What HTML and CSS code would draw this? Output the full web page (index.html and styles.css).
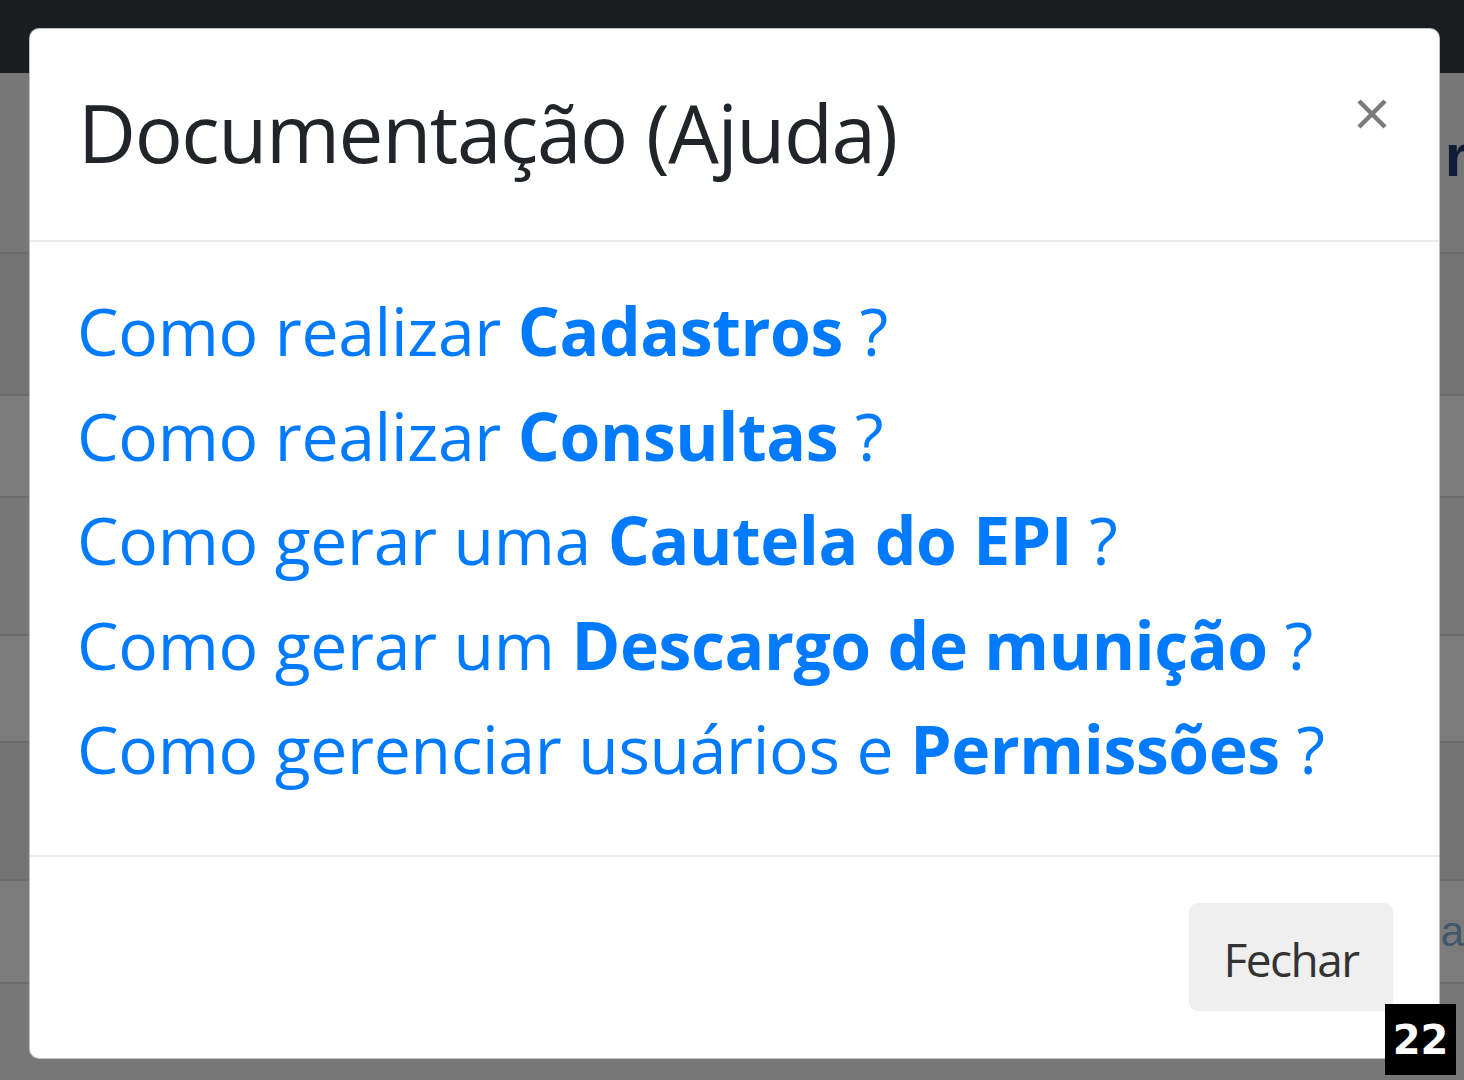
FILE: index.html
```html
<!DOCTYPE html>
<html lang="pt-BR">
<head>
<meta charset="utf-8">
<title>Documentação (Ajuda)</title>
<link rel="stylesheet" href="styles.css">
</head>
<body>
<div class="page">
  <div class="navbar"></div>
  <div class="rows">
    <div class="row r-mid"><span class="peek peek-r">r</span></div>
    <div class="row r-dark"></div>
    <div class="row r-light"></div>
    <div class="row r-mid"></div>
    <div class="row r-light"></div>
    <div class="row r-dark"></div>
    <div class="row r-light"><span class="peek peek-a">a</span></div>
    <div class="row r-mid last"></div>
  </div>
</div>

<div class="modal">
  <div class="modal-header">
    <h5 class="modal-title">Documentação (Ajuda)</h5>
    <button class="close" type="button" aria-label="Fechar">
      <svg width="32" height="32" viewBox="0 0 32 32"><path d="M3 3 L29 29 M29 3 L3 29" stroke="#7a7a7a" stroke-width="4.5" stroke-linecap="butt"/></svg>
    </button>
  </div>
  <div class="modal-body">
    <a class="doc-link" href="#">Como realizar <b>Cadastros</b> ?</a>
    <a class="doc-link" href="#">Como realizar <b>Consultas</b> ?</a>
    <a class="doc-link" href="#">Como gerar uma <b>Cautela do EPI</b> ?</a>
    <a class="doc-link" href="#">Como gerar um <b>Descargo de munição</b> ?</a>
    <a class="doc-link" href="#">Como gerenciar usuários e <b>Permissões</b> ?</a>
  </div>
  <div class="modal-footer">
    <button class="btn" type="button">Fechar</button>
  </div>
</div>
<div class="badge">22</div>
</body>
</html>
```
FILE: styles.css
```css
html, body {
  margin: 0;
  padding: 0;
  width: 1464px;
  height: 1080px;
  overflow: hidden;
  font-family: "Open Sans", "Noto Sans", "Liberation Sans", sans-serif;
}
body {
  background: #777777;
  position: relative;
}
.page {
  display: flex;
  flex-direction: column;
  height: 1080px;
}
.navbar {
  height: 73px;
  background: #1b1e21;
  flex: none;
}
.rows {
  display: flex;
  flex-direction: column;
  flex: 1;
}
.row {
  display: flex;
  justify-content: flex-end;
  align-items: center;
  border-bottom: 2px solid #6b6c6f;
  box-sizing: border-box;
  overflow: hidden;
}
.row:nth-child(1) { height: 181px; }
.row:nth-child(2) { height: 142px; }
.row:nth-child(3) { height: 102px; }
.row:nth-child(4) { height: 138px; }
.row:nth-child(5) { height: 107px; }
.row:nth-child(6) { height: 138px; }
.row:nth-child(7) { height: 103px; }
.row.last { flex: 1; border-bottom: none; }
.r-mid { background: #777777; }
.r-dark { background: #737373; }
.r-light { background: #7b7b7b; }
.peek {
  font-family: "Liberation Sans", sans-serif;
}
.peek-r {
  font-size: 60px;
  font-weight: bold;
  color: #101c38;
  align-self: flex-start;
  margin-top: 48px;
  margin-right: -4px;
}
.peek-a {
  font-size: 42px;
  color: #40576b;
  margin-right: 0px;
}

.modal {
  position: absolute;
  left: 29px;
  top: 28px;
  width: 1411px;
  height: 1031px;
  box-sizing: border-box;
  background: #ffffff;
  border: 1px solid rgba(0, 0, 0, 0.25);
  border-radius: 10px;
  display: flex;
  flex-direction: column;
  color: #212529;
}
.modal-header {
  height: 213px;
  box-sizing: border-box;
  border-bottom: 2px solid #e9ecef;
  display: flex;
  align-items: flex-start;
  justify-content: space-between;
  padding: 0 51px 0 48px;
  flex: none;
}
.modal-title {
  margin: 0;
  margin-top: 55px;
  font-size: 80px;
  font-weight: 500;
  line-height: 1.2;
  color: #212529;
  letter-spacing: -1.4px;
}
.close {
  border: none;
  background: transparent;
  padding: 0;
  margin-top: 69px;
  width: 32px;
  height: 32px;
  display: flex;
}
.modal-body {
  flex: 1;
  display: flex;
  flex-direction: column;
  padding: 36px 48px 0 47px;
}
.doc-link {
  color: #007bff;
  text-decoration: none;
  font-size: 66px;
  font-weight: 500;
  line-height: 104.5px;
  letter-spacing: -0.3px;
  white-space: nowrap;
}
.doc-link b {
  font-weight: 700;
  letter-spacing: -0.4px;
}
.modal-footer {
  flex: none;
  height: 203px;
  box-sizing: border-box;
  border-top: 2px solid #e9ecef;
  display: flex;
  justify-content: flex-end;
  align-items: flex-start;
  padding: 46px 46px 0 0;
}
.btn {
  width: 204px;
  height: 108px;
  border: none;
  border-radius: 9px;
  background: #efefef;
  color: #333333;
  font-family: "Open Sans", "Noto Sans", sans-serif;
  font-size: 46px;
  font-weight: 500;
  letter-spacing: -1.5px;
  padding: 4px 0 0 0;
}
.badge {
  position: absolute;
  left: 1385px;
  top: 1004px;
  width: 71px;
  height: 71px;
  background: #000000;
  color: #ffffff;
  font-family: "DejaVu Sans", sans-serif;
  font-weight: bold;
  font-size: 40px;
  display: flex;
  align-items: center;
  justify-content: center;
}
```
